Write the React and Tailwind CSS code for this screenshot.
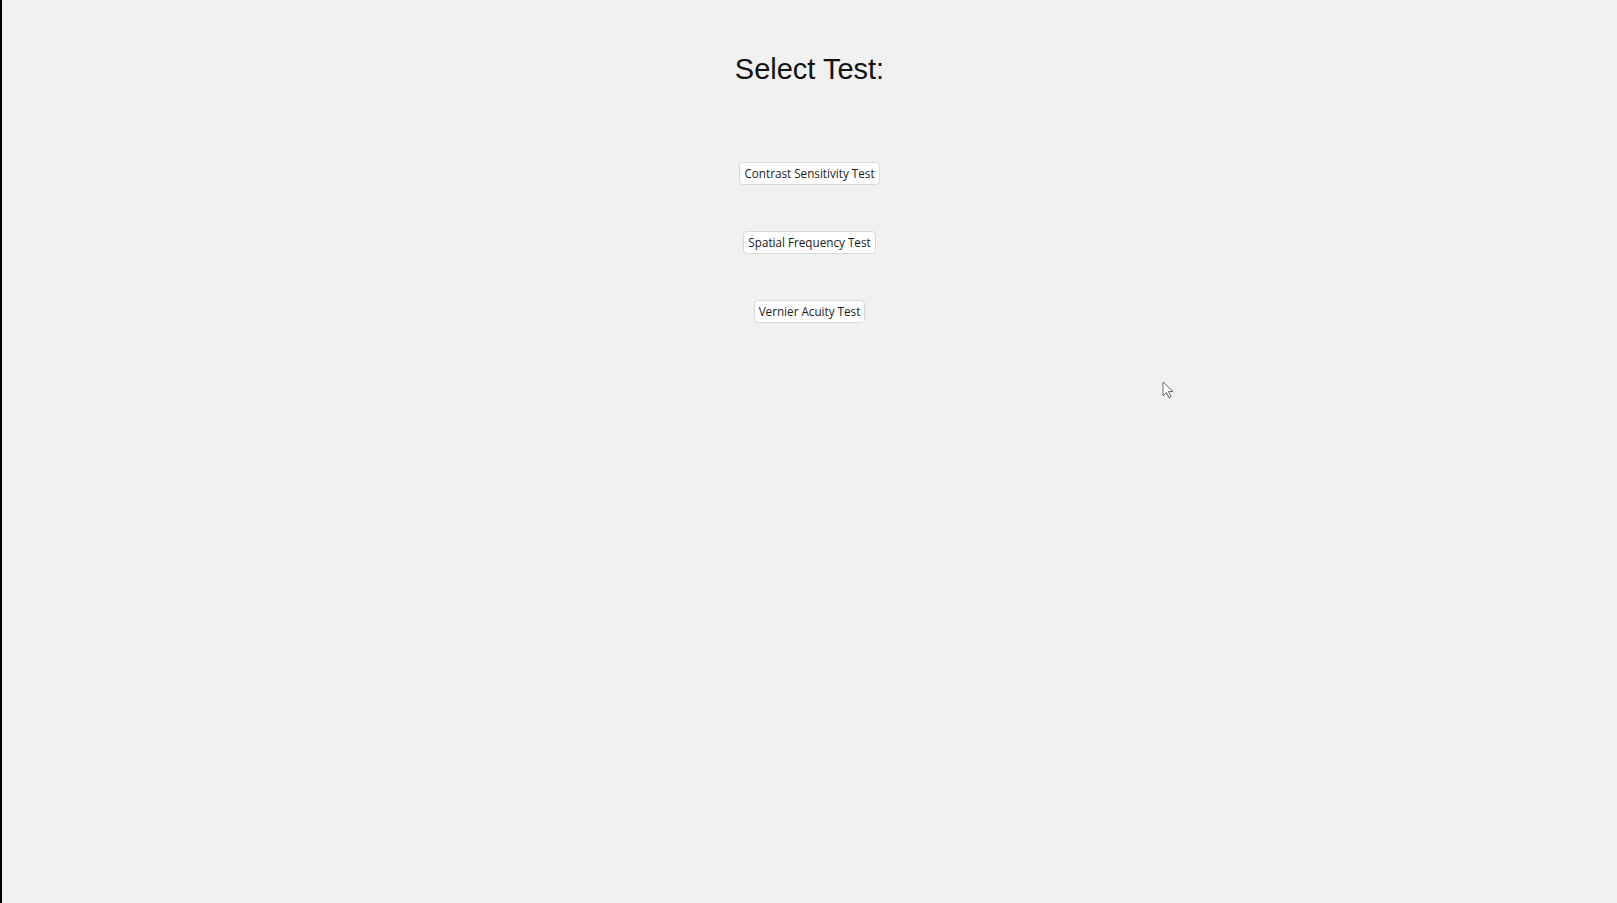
import React from "react";

const tests = [
  "Contrast Sensitivity Test",
  "Spatial Frequency Test",
  "Vernier Acuity Test",
];

const Cursor = () => (
  <svg
    className="absolute left-[1160px] top-[381px]"
    width="13"
    height="19"
    viewBox="0 0 13 19"
  >
    <path
      d="M1 1 L1 15 L4.5 11.5 L7 17 L9 16 L6.5 10.5 L11 10.5 Z"
      fill="#ffffff"
      stroke="#6b6b6b"
      strokeWidth="1"
      strokeLinejoin="round"
    />
  </svg>
);

export default function App() {
  return (
    <div className="relative h-screen w-full overflow-hidden border-l-2 border-black bg-[#f1f1f1]">
      <div className="flex flex-col items-center pt-[55px]">
        <h1
          className="text-[29px] leading-none text-[#111111]"
          style={{ fontFamily: '"Liberation Sans", Arial, sans-serif' }}
        >
          Select Test:
        </h1>
        <div className="mt-[78px] flex flex-col items-center gap-[46px]">
          {tests.map((name) => (
            <button
              key={name}
              className="h-[23px] rounded-[4px] border border-[#d9d9d9] bg-white px-[4px] text-[11.7px] leading-none text-[#1b1b1b]"
              style={{ fontFamily: '"Open Sans", "Noto Sans", sans-serif' }}
            >
              {name}
            </button>
          ))}
        </div>
      </div>
      <Cursor />
    </div>
  );
}
